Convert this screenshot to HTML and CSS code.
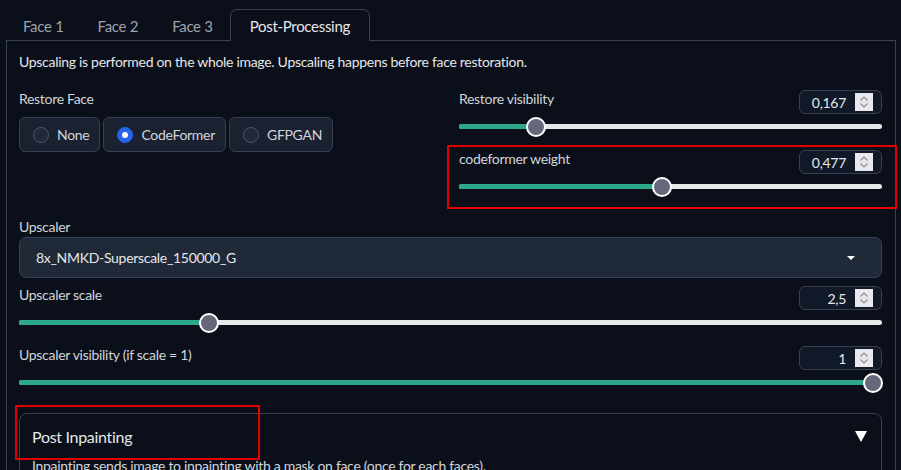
FILE: index.html
```html
<!DOCTYPE html>
<html lang="en">
<head>
<meta charset="utf-8">
<title>Post-Processing</title>
<link rel="stylesheet" href="styles.css">
</head>
<body>
<div class="app">
  <div class="tabs">
    <button class="tab">Face 1</button>
    <button class="tab">Face 2</button>
    <button class="tab">Face 3</button>
    <button class="tab selected">Post-Processing</button>
  </div>
  <div class="panel">
    <p class="desc">Upscaling is performed on the whole image. Upscaling happens before face restoration.</p>
    <div class="row">
      <div class="col-left">
        <div class="label">Restore Face</div>
        <div class="radios">
          <label class="radio"><span class="circle"></span>None</label>
          <label class="radio"><span class="circle checked"></span>CodeFormer</label>
          <label class="radio"><span class="circle"></span>GFPGAN</label>
        </div>
      </div>
      <div class="col-right">
        <div class="slider-block">
          <div class="slider-head">
            <span class="label">Restore visibility</span>
            <div class="num"><span class="num-val">0,167</span><span class="spin"><svg width="18" height="18" viewBox="0 0 18 18"><path d="M5.5 7.5 L9 4 L12.5 7.5 M5.5 10.5 L9 14 L12.5 10.5" fill="none" stroke="#8c8c92" stroke-width="1.2"/></svg></span></div>
          </div>
          <div class="slider"><div class="track"><div class="fill" style="width:18.2%"></div><div class="thumb" style="left:18.2%"></div></div></div>
        </div>
        <div class="slider-block next">
          <div class="slider-head">
            <span class="label">codeformer weight</span>
            <div class="num"><span class="num-val">0,477</span><span class="spin"><svg width="18" height="18" viewBox="0 0 18 18"><path d="M5.5 7.5 L9 4 L12.5 7.5 M5.5 10.5 L9 14 L12.5 10.5" fill="none" stroke="#8c8c92" stroke-width="1.2"/></svg></span></div>
          </div>
          <div class="slider"><div class="track"><div class="fill" style="width:47.9%"></div><div class="thumb" style="left:47.9%"></div></div></div>
        </div>
      </div>
    </div>
    <div class="dropdown-block">
      <div class="label">Upscaler</div>
      <div class="dropdown">
        <span>8x_NMKD-Superscale_150000_G</span>
        <svg width="8" height="4" viewBox="0 0 8 4"><polygon points="0,0 8,0 4,4" fill="#ffffff"/></svg>
      </div>
    </div>
    <div class="slider-block wide">
      <div class="slider-head">
        <span class="label">Upscaler scale</span>
        <div class="num"><span class="num-val">2,5</span><span class="spin"><svg width="18" height="18" viewBox="0 0 18 18"><path d="M5.5 7.5 L9 4 L12.5 7.5 M5.5 10.5 L9 14 L12.5 10.5" fill="none" stroke="#8c8c92" stroke-width="1.2"/></svg></span></div>
      </div>
      <div class="slider"><div class="track"><div class="fill" style="width:22%"></div><div class="thumb" style="left:22%"></div></div></div>
    </div>
    <div class="slider-block wide next">
      <div class="slider-head">
        <span class="label">Upscaler visibility (if scale = 1)</span>
        <div class="num"><span class="num-val">1</span><span class="spin"><svg width="18" height="18" viewBox="0 0 18 18"><path d="M5.5 7.5 L9 4 L12.5 7.5 M5.5 10.5 L9 14 L12.5 10.5" fill="none" stroke="#8c8c92" stroke-width="1.2"/></svg></span></div>
      </div>
      <div class="slider"><div class="track"><div class="fill" style="width:98.95%"></div><div class="thumb" style="left:98.95%"></div></div></div>
    </div>
    <div class="accordion">
      <div class="acc-head">
        <span class="acc-title">Post Inpainting</span>
        <svg width="12" height="11" viewBox="0 0 12 11"><polygon points="0,0 12,0 6,11" fill="#ffffff"/></svg>
      </div>
      <p class="acc-text">Inpainting sends image to inpainting with a mask on face (once for each faces).</p>
    </div>
  </div>
  <div class="mark mark-one"></div>
  <div class="mark mark-two"></div>
</div>
</body>
</html>
```
FILE: styles.css
```css
* { box-sizing: border-box; }
html, body { margin: 0; padding: 0; background: #0b0f19; }
body {
  font-family: Lato, "Noto Sans", sans-serif;
  font-size: 14px;
  letter-spacing: -0.3px;
  color: #e5e7eb;
  width: 901px;
  height: 470px;
  overflow: hidden;
}
.app { position: relative; padding-top: 9px; }

.tabs { display: flex; padding-left: 6px; height: 31px; position: relative; z-index: 1; }
.tab {
  font-family: inherit;
  font-size: 15px;
  letter-spacing: -0.3px;
  background: transparent;
  border: 1px solid transparent;
  border-bottom: none;
  color: #9ca3af;
  padding: 0 16px;
  height: 32px;
  border-radius: 7px 7px 0 0;
  line-height: 30px;
}
.tab.selected { border-color: #374151; color: #e5e7eb; background: #0b0f19; padding: 0 19px; }

.panel {
  margin: 0 5px 0 6px;
  border: 1px solid #374151;
  border-bottom: none;
  padding: 11px 13px 0 12px;
  height: 440px;
}
.desc { margin: 0; line-height: 20px; color: #e5e7eb; }

.label { color: #d1d5db; line-height: 20px; }

.row { display: flex; margin-top: 17px; }
.col-left { flex: 0 0 428px; }
.col-right { flex: 1; padding-left: 12px; padding-top: 1px; }

.radios { display: flex; gap: 3px; margin-top: 8px; }
.radio {
  display: flex;
  align-items: center;
  height: 35px;
  padding: 0 10px 0 13px;
  gap: 8px;
  background: #1a2130;
  border: 1px solid #374151;
  border-radius: 6px;
  color: #d1d5db;
}
.circle {
  width: 16px; height: 16px;
  border-radius: 50%;
  background: #1f2937;
  border: 1px solid #4b5563;
  display: flex; align-items: center; justify-content: center;
}
.circle.checked { background: #2563eb; border-color: #2563eb; }
.circle.checked::after {
  content: "";
  width: 6px; height: 6px; border-radius: 50%; background: #ffffff;
}

.slider-block.next { margin-top: 11px; }
.slider-head { display: flex; justify-content: space-between; align-items: flex-start; height: 24px; }
.slider-head .label { line-height: 18px; }
.num {
  width: 83px; height: 24px;
  border: 1px solid #374151;
  border-radius: 6px;
  background: #111827;
  display: flex; align-items: center; justify-content: flex-end;
  padding-right: 8px;
  gap: 9px;
}
.num-val { color: #e5e7eb; }
.spin { width: 18px; height: 18px; background: #e9e9ed; display: block; }
.spin svg { display: block; }

.slider { height: 25px; display: flex; align-items: center; }
.track {
  position: relative;
  width: 100%;
  height: 5px;
  border-radius: 3px;
  background: #e5e7eb;
}
.fill { height: 100%; border-radius: 3px; background: #2ba88a; }
.thumb {
  position: absolute;
  top: 50%;
  width: 20px; height: 20px;
  margin: -10px 0 0 -10px;
  border-radius: 50%;
  background: #66677a;
  border: 2px solid #ffffff;
}

.dropdown-block { margin-top: 18px; }
.dropdown {
  height: 41px;
  background: #1f2937;
  border: 1px solid #374151;
  border-radius: 7px;
  display: flex; align-items: center; justify-content: space-between;
  padding: 0 26px 0 16px;
  color: #e5e7eb;
}
.dropdown svg { display: block; }
.slider-block.wide { margin-top: 8px; }
.slider-block.wide.next { margin-top: 11px; }

.accordion {
  margin-top: 18px;
  border: 1px solid #374151;
  border-radius: 8px;
  padding: 11px 14px 0 12px;
  height: 80px;
}
.acc-head { display: flex; justify-content: space-between; align-items: center; height: 22px; }
.acc-title { font-size: 16px; color: #e5e7eb; }
.acc-head svg { display: block; }
.acc-text { margin: 9px 0 0; line-height: 20px; color: #d1d5db; }

.mark { position: absolute; border: 2px solid #e00000; }
.mark-one { left: 447px; top: 145px; width: 450px; height: 64px; }
.mark-two { left: 15px; top: 405px; width: 245px; height: 55px; }
```
